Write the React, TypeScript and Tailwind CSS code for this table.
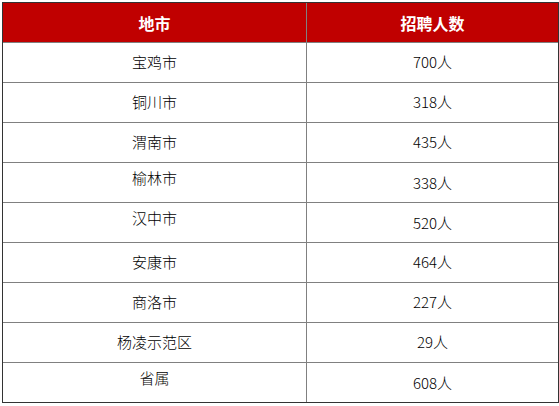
import React from "react";

const rows: [string, string, boolean][] = [
  ["宝鸡市", "700人", false],
  ["铜川市", "318人", false],
  ["渭南市", "435人", false],
  ["榆林市", "338人", true],
  ["汉中市", "520人", true],
  ["安康市", "464人", false],
  ["商洛市", "227人", false],
  ["杨凌示范区", "29人", false],
  ["省属", "608人", true],
];

export default function App() {
  return (
    <div
      className="w-[559px] h-[406px] bg-white pt-[2px] pl-[2px]"
      style={{ fontFamily: '"Noto Sans CJK SC", "Noto Sans", sans-serif' }}
    >
      <div className="w-[557px] border border-[#333333] flex flex-col">
        <div className="flex h-[40px] bg-[#c00000] text-white font-bold text-[16px] border-b border-[#808080]">
          <div className="w-[304px] border-r border-[#808080] flex items-center justify-center">地市</div>
          <div className="flex-1 flex items-center justify-center">招聘人数</div>
        </div>
        {rows.map(([city, n, up], i) => (
          <div
            key={city}
            className={
              "flex text-[15px] font-light text-black " +
              (i < rows.length - 1 ? "h-[40px] border-b border-[#808080]" : "h-[39px]")
            }
          >
            <div
              className={
                "w-[304px] border-r border-[#808080] flex items-center justify-center " +
                (up ? "pb-[9px]" : "")
              }
            >
              {city}
            </div>
            <div className={"flex-1 flex items-center justify-center " + (up ? "pt-[1px]" : "")}>{n}</div>
          </div>
        ))}
      </div>
    </div>
  );
}
